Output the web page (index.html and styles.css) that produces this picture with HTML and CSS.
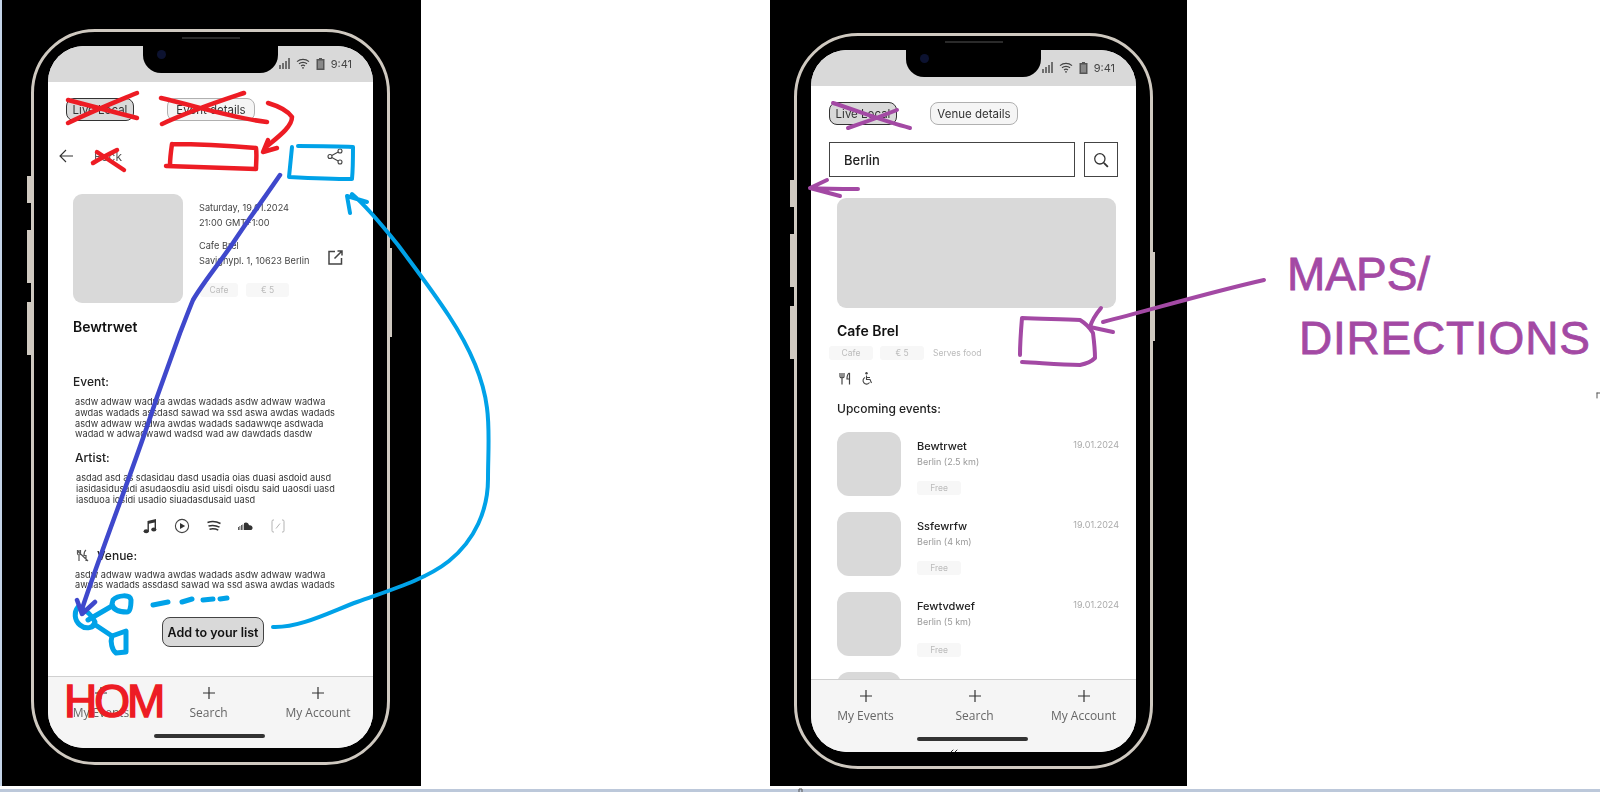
FILE: index.html
```html
<!DOCTYPE html>
<html lang="en">
<head>
    <meta charset="UTF-8">
    <meta name="viewport" content="width=device-width, initial-scale=1.0">
    <title>Wireframe review</title>
    <link rel="stylesheet" href="styles.css">
</head>
<body>
    <div class="desk">
        <!-- Event details wireframe -->
        <section class="panel panel-event">
            <div class="phone">
                <span class="side side-a"></span><span class="side side-b"></span><span class="side side-c"></span><span class="side side-r"></span>
                <span class="speaker"></span>
                <div class="screen">
                    <div class="notch"><span class="camera"></span></div>
                    <div class="statusbar">
                        <svg width="11" height="11" viewBox="0 0 11 11"><path d="M1 7v4M4 5v6M7 3v8M10 0v11" stroke="#555" stroke-width="1.600"/></svg>
                        <svg width="14" height="11" viewBox="0 0 14 11" fill="none" stroke="#444" stroke-width="1.200"><path d="M1 3.600C4.500.6 9.500.6 13 3.600M3 5.800c2.200-1.900 5.800-1.900 8 0M5 7.900c1.100-.8 2.900-.8 4 0"/><circle cx="7" cy="9.800" r=".9" fill="#444" stroke="none"/></svg>
                        <svg width="9" height="12" viewBox="0 0 9 12"><path d="M3 0h3v1h2.500v11H.5V1H3z" fill="#555"/><path d="M2 2.500h5v8H2z" fill="#888"/></svg>
                        <span class="clock">9:41</span>
                    </div>
                    <main class="main">
                        <div class="pills">
                            <span class="pill pill-on">Live Local</span>
                            <span class="pill">Event details</span>
                        </div>
                        <div class="backrow">
                            <svg width="14" height="14" viewBox="0 0 14 14" fill="none" stroke="#333" stroke-width="1.100"><path d="M14 7H1M7 1 1 7l6 6"/></svg>
                            <span class="back">Back</span>
                            <svg class="share" width="16" height="17" viewBox="0 0 16 17" fill="none" stroke="#444" stroke-width="1.100"><circle cx="13" cy="3" r="2"/><circle cx="3" cy="8.500" r="2"/><circle cx="13" cy="14" r="2"/><path d="m4.800 7.500 6.400-3.500M4.800 9.500l6.400 3.500"/></svg>
                        </div>
                        <div class="detail">
                            <div class="thumb thumb-big"></div>
                            <div class="info">
                                <p class="info-line">Saturday, 19.01.2024</p>
                                <p class="info-line">21:00 GMT+1:00</p>
                                <div class="venue-line">
                                    <div>
                                        <p class="info-line">Cafe Brel</p>
                                        <p class="info-line">Savignypl. 1, 10623 Berlin</p>
                                    </div>
                                    <svg class="ext" width="15" height="15" viewBox="0 0 15 15" fill="none" stroke="#444" stroke-width="1.500"><path d="M7 1.500H1v12.500h12.500V8M6.500 8.500 14 1M9.500 1H14v4.500"/></svg>
                                </div>
                                <div class="chips chips-detail">
                                    <span class="chip chip-a">Cafe</span>
                                    <span class="chip chip-b">€ 5</span>
                                </div>
                            </div>
                        </div>
                        <h1 class="title">Bewtrwet</h1>
                        <h2 class="label label-event">Event:</h2>
                        <p class="copy copy-event">asdw adwaw wadwa awdas wadads asdw adwaw wadwa<br>awdas wadads assdasd sawad wa ssd aswa awdas wadads<br>asdw adwaw wadwa awdas wadads sadawwqe asdwada<br>wadad w adwadwawd wadsd wad aw dawdads dasdw</p>
                        <h2 class="label label-artist">Artist:</h2>
                        <p class="copy copy-artist">asdad asd as sdasidau dasd usadia oias duasi asdoid ausd<br>iasidasidusadi asudaosdiu asid uisdi oisdu said uaosdi uasd<br>iasduoa iosidi usadio siuadasdusaid uasd</p>
                        <div class="links">
                            <svg width="16" height="16" viewBox="0 0 16 16" fill="#333"><path d="M5.500 3 14 1v10.500h-1.400V4.400l-5.700 1.300v7.800H5.500z"/><ellipse cx="4.200" cy="13.300" rx="2.600" ry="2"/><ellipse cx="11.800" cy="11.500" rx="2.600" ry="2"/></svg>
                            <svg width="16" height="16" viewBox="0 0 16 16" fill="#333"><circle cx="8" cy="8" r="6.600" fill="none" stroke="#444" stroke-width="1.100"/><path d="M6 5v6l5.200-3z"/></svg>
                            <svg width="16" height="16" viewBox="0 0 16 16" fill="none" stroke="#333" stroke-width="1.500"><path d="M1.500 4.500c4-1.300 9-1 13 1M2.500 8c3.500-1 7.500-.7 11 1.200M3.500 11.200c3-.7 6-.5 8.800 1"/></svg>
                            <svg width="16" height="16" viewBox="0 0 16 16" fill="#333"><path d="M0 9h.8v3H0zM1.500 8h.8v4h-.8zM3 7h.8v5H3zM4.500 6.500h.8V12h-.8z"/><path d="M6 12V5.200C8 3.700 10.800 5 11 7.300c1.900-.6 3.600 1 3.600 2.400 0 1.400-1 2.300-2.200 2.300z"/></svg>
                            <svg width="16" height="16" viewBox="0 0 16 16" fill="none" stroke="#aaa" stroke-width=".9"><path d="M4 2H3Q2 2 2 3.500v9Q2 14 3 14h1M12 2h1q1 0 1 1.500v9q0 1.500-1 1.500h-1M6 10.500 10 5.500"/></svg>
                        </div>
                        <div class="venue-head">
                            <svg width="13" height="13" viewBox="0 0 13 13" fill="none" stroke="#555" stroke-width="1.200"><path d="M1.500 1v3.500c0 1 1 1.500 1.500 1.500v6M3 1v3M4.500 1v3.500C4.500 5.500 3.500 6 3 6M10 1c-1.500 1-2 3-2 5.500h2V12M1 1.500 12 12"/></svg>
                            <h2 class="label">Venue:</h2>
                        </div>
                        <p class="copy copy-venue">asdw adwaw wadwa awdas wadads asdw adwaw wadwa<br>awdas wadads assdasd sawad wa ssd aswa awdas wadads</p>
                        <button class="cta">Add to your list</button>
                    </main>
                    <nav class="tabs tabs-event">
                        <div class="tab-row">
                            <div class="tab"><svg width="14" height="14" viewBox="0 0 14 14"><path d="M7 1v12M1 7h12" stroke="#333" stroke-width="1.200"/></svg><span>My Events</span></div>
                            <div class="tab"><svg width="14" height="14" viewBox="0 0 14 14"><path d="M7 1v12M1 7h12" stroke="#333" stroke-width="1.200"/></svg><span>Search</span></div>
                            <div class="tab"><svg width="14" height="14" viewBox="0 0 14 14"><path d="M7 1v12M1 7h12" stroke="#333" stroke-width="1.200"/></svg><span>My Account</span></div>
                        </div>
                        <div class="home"></div>
                    </nav>
                </div>
            </div>
        </section>

        <!-- Venue details wireframe -->
        <section class="panel panel-venue">
            <div class="phone">
                <span class="side side-a"></span><span class="side side-b"></span><span class="side side-c"></span><span class="side side-r"></span>
                <span class="speaker"></span>
                <div class="screen">
                    <div class="notch"><span class="camera"></span></div>
                    <div class="statusbar">
                        <svg width="11" height="11" viewBox="0 0 11 11"><path d="M1 7v4M4 5v6M7 3v8M10 0v11" stroke="#555" stroke-width="1.600"/></svg>
                        <svg width="14" height="11" viewBox="0 0 14 11" fill="none" stroke="#444" stroke-width="1.200"><path d="M1 3.600C4.500.6 9.500.6 13 3.600M3 5.800c2.200-1.900 5.800-1.900 8 0M5 7.900c1.100-.8 2.900-.8 4 0"/><circle cx="7" cy="9.800" r=".9" fill="#444" stroke="none"/></svg>
                        <svg width="9" height="12" viewBox="0 0 9 12"><path d="M3 0h3v1h2.500v11H.5V1H3z" fill="#555"/><path d="M2 2.500h5v8H2z" fill="#888"/></svg>
                        <span class="clock">9:41</span>
                    </div>
                    <main class="main">
                        <div class="pills">
                            <span class="pill pill-on">Live Local</span>
                            <span class="pill">Venue details</span>
                        </div>
                        <div class="searchrow">
                            <div class="searchbox">Berlin</div>
                            <div class="searchbtn">
                                <svg width="16" height="16" viewBox="0 0 14 14" fill="none" stroke="#333" stroke-width="1.100"><circle cx="6" cy="6" r="4.500"/><path d="m9.500 9.500 3.500 3.500" stroke-width="1.600"/></svg>
                            </div>
                        </div>
                        <div class="thumb thumb-wide"></div>
                        <h1 class="title title-venue">Cafe Brel</h1>
                        <div class="chips chips-venue">
                            <span class="chip chip-c">Cafe</span>
                            <span class="chip chip-c">€ 5</span>
                            <span class="chip-plain">Serves food</span>
                        </div>
                        <div class="amenities">
                            <svg width="12" height="13" viewBox="0 0 12 13" fill="none" stroke="#444" stroke-width="1.200"><path d="M1 1v3.500C1 5.500 2 6 3 6s2-.5 2-1.500V1M3 1v11.500M10.500 1C9 1.500 8 3.500 8 7h2.500M10.500 1v11.500"/></svg>
                            <svg width="11" height="13" viewBox="0 0 11 13" fill="none" stroke="#444" stroke-width="1.100"><circle cx="4.500" cy="1.300" r="1.200" fill="#444" stroke="none"/><path d="M4.500 3.500v4h3.500l1.500 3.500M4.500 5.500h3.500M3 5.500a3.500 3.500 0 1 0 4.500 5"/></svg>
                        </div>
                        <h2 class="label label-upcoming">Upcoming events:</h2>
                        <div class="eventlist">
                            <div class="event">
                                <div class="thumb thumb-small"></div>
                                <div class="event-body">
                                    <div class="event-title">Bewtrwet</div>
                                    <div class="event-sub">Berlin (2.5 km)</div>
                                    <span class="chip chip-c chip-free">Free</span>
                                </div>
                                <div class="event-date">19.01.2024</div>
                            </div>
                            <div class="event">
                                <div class="thumb thumb-small"></div>
                                <div class="event-body">
                                    <div class="event-title">Ssfewrfw</div>
                                    <div class="event-sub">Berlin (4 km)</div>
                                    <span class="chip chip-c chip-free">Free</span>
                                </div>
                                <div class="event-date">19.01.2024</div>
                            </div>
                            <div class="event">
                                <div class="thumb thumb-small"></div>
                                <div class="event-body">
                                    <div class="event-title">Fewtvdwef</div>
                                    <div class="event-sub">Berlin (5 km)</div>
                                    <span class="chip chip-c chip-free chip-low">Free</span>
                                </div>
                                <div class="event-date">19.01.2024</div>
                            </div>
                            <div class="event">
                                <div class="thumb thumb-small"></div>
                            </div>
                        </div>
                    </main>
                    <nav class="tabs tabs-venue">
                        <div class="tab-row">
                            <div class="tab"><svg width="14" height="14" viewBox="0 0 14 14"><path d="M7 1v12M1 7h12" stroke="#333" stroke-width="1.200"/></svg><span>My Events</span></div>
                            <div class="tab"><svg width="14" height="14" viewBox="0 0 14 14"><path d="M7 1v12M1 7h12" stroke="#333" stroke-width="1.200"/></svg><span>Search</span></div>
                            <div class="tab"><svg width="14" height="14" viewBox="0 0 14 14"><path d="M7 1v12M1 7h12" stroke="#333" stroke-width="1.200"/></svg><span>My Account</span></div>
                        </div>
                        <div class="home"></div>
                    </nav>
                </div>
            </div>
        </section>
    </div>
    <div class="strip"></div>

    <!-- Paint scribbles drawn over the screenshots -->
    <svg class="ink" width="1600" height="792" viewBox="0 0 1600 792" fill="none" stroke-linecap="round" stroke-linejoin="round">
        <g stroke="#ed1c24" stroke-width="4.500">
            <path d="M68 100 137 118M68 123C93 111 113 103 137 93"/>
            <path d="M161 98C196 106 231 118 267 122M162 124C192 110 217 102 244 93"/>
            <path d="M268 103C278 106 288 111 292 117 292 127 278 137 266 147M268 140 263 152 277 148"/>
            <path d="M172 144C171 151 170 158 170 165M172 144C202 144 232 146 256 148 257 155 256 162 256 169 228 168 196 167 166 166"/>
            <path d="M93 163C101 158 109 154 117 150M97 152 124 170"/>
        </g>
        <g stroke="#00a2e8" stroke-width="4">
            <path d="M292 147C291 157 290 167 289 177 309 178 331 179 352 179 353 169 353 157 353 147 335 146 317 146 298 146"/>
            <path d="M273 627C300 628 330 612 357 602 390 590 425 580 449 561 475 540 488 510 488 479 488 455 490 430 487 408 483 375 468 345 449 316 432 290 415 268 398 245 382 225 365 205 352 194M367 202 347 196 350 213"/>
        </g>
        <g stroke="#00a2e8" stroke-width="5">
            <path d="M78 607C74 612 74 620 80 625 86 630 94 628 95 622 92 615 86 610 78 607Z"/>
            <path d="M88 620 112 606M94 624 112 636"/>
            <path d="M113 600C118 595 130 594 131 600 131 607 130 612 127 612 120 612 113 610 112 604Z"/>
            <path d="M112 636 126 631 126 652 116 653C112 650 110 642 112 636Z"/>
            <path d="M153 605 168 602M182 602 192 599M203 600 213 599M220 599 227 598"/>
        </g>
        <path stroke="#3f48cc" stroke-width="4.500" d="M280 175C265 197 248 220 233 243 218 265 203 283 193 300 188 312 184 323 180 333 172 355 165 375 157 397 135 465 105 540 82 609M77 600 82 614 95 602"/>
        <g stroke="#a349a4" stroke-width="4">
            <path d="M833 103C858 111 883 121 910 128M848 128C866 122 882 116 897 110"/>
            <path d="M858 189C842 189 826 189 810 188M827 180 810 188 840 196"/>
            <path d="M1020 355C1020 343 1021 330 1022 318 1042 319 1062 319 1080 320 1085 323 1090 328 1093 333 1094 341 1095 350 1095 358 1091 362 1085 364 1080 365 1060 365 1042 363 1022 362"/>
            <path d="M1103 322C1157 308 1211 292 1264 280M1101 308C1096 314 1092 320 1090 327L1113 332"/>
        </g>
        <path stroke="#222" stroke-width="1" d="M951 752 953 750M955 752 957 750"/>
        <path stroke="#555" stroke-width="1" d="M799 792V789H802V792M1597 393H1600M1597 393V398"/>
    </svg>
    <div class="scrawl scrawl-hom">HOM</div>
    <div class="scrawl scrawl-maps">MAPS/</div>
    <div class="scrawl scrawl-dir">DIRECTIONS</div>
</body>
</html>
```

FILE: styles.css
```css
* {
    box-sizing: border-box;
}

body {
    margin: 0;
    width: 1600px;
    height: 792px;
    overflow: hidden;
    position: relative;
    background: #fff;
    font-family: Inter, "Liberation Sans", sans-serif;
    color: #222;
}

p, h1, h2 {
    margin: 0;
}

.desk {
    display: flex;
    height: 786px;
    border-left: 2px solid #c4d4e8;
}

.strip {
    height: 3px;
    margin-top: 3px;
    background: #bcc8da;
}

.panel {
    background: #000;
    flex: none;
}

.panel-event {
    width: 419px;
    padding: 29px 0 0 29px;
}

.panel-venue {
    width: 417px;
    margin-left: 349px;
    padding: 33px 0 0 24px;
}

/* phone shell */
.phone {
    position: relative;
    width: 359px;
    height: 736px;
    padding: 14px;
    border: 3px solid #cfc9c0;
    border-radius: 64px;
}

.side {
    position: absolute;
    background: #cfc9c0;
}

.side-a { left: -7px; width: 4px; top: 144px; height: 27px; }
.side-b { left: -7px; width: 4px; top: 198px; height: 53px; }
.side-c { left: -7px; width: 4px; top: 270px; height: 53px; }
.side-r { right: -5px; width: 2px; top: 216px; height: 89px; }

.speaker {
    position: absolute;
    left: 148px;
    top: 5px;
    width: 58px;
    height: 2px;
    background: #2a2a2a;
}

.screen {
    position: relative;
    width: 325px;
    height: 702px;
    display: flex;
    flex-direction: column;
    overflow: hidden;
    background: #fff;
    border-radius: 36px;
    filter: blur(.3px);
}

.notch {
    position: absolute;
    left: 95px;
    top: 0;
    width: 135px;
    height: 27px;
    background: #000;
    border-radius: 0 0 18px 18px;
}

.camera {
    position: absolute;
    left: 14px;
    top: 4px;
    width: 9px;
    height: 9px;
    border-radius: 50%;
    background: #0c1230;
}

.statusbar {
    flex: none;
    height: 36px;
    padding: 12px 21px 0 0;
    display: flex;
    align-items: flex-start;
    justify-content: flex-end;
    gap: 6px;
    background: #d9d9d9;
}

.clock {
    font-size: 11px;
    line-height: 13px;
    color: #444;
}

.main {
    flex: 1;
    min-height: 0;
    overflow: hidden;
}

/* pills */
.pills {
    display: flex;
    gap: 33px;
    padding: 16px 0 0 18px;
}

.pill {
    height: 23px;
    width: 88px;
    display: flex;
    align-items: center;
    justify-content: center;
    font-size: 11.500px;
    color: #333;
    background: #f5f5f5;
    border: 1px solid #b0b0b0;
    border-radius: 8px;
}

.pill-on {
    width: 68px;
    background: #d9d9d9;
    border-color: #333;
}

/* event screen */
.backrow {
    display: flex;
    align-items: center;
    height: 20px;
    margin: 25px 30px 0 11px;
    gap: 21px;
}

.back {
    font-size: 12px;
    color: #555;
}

.share {
    margin-left: auto;
}

.detail {
    display: flex;
    gap: 16px;
    margin-top: 28px;
    padding-left: 25px;
}

.thumb {
    background: #d9d9d9;
    border-radius: 9px;
}

.thumb-big {
    width: 110px;
    height: 109px;
    flex: none;
}

.info {
    width: 144px;
    padding-top: 6px;
}

.info-line {
    font-size: 9.200px;
    line-height: 15px;
    white-space: nowrap;
    color: #444;
}

.venue-line {
    display: flex;
    justify-content: space-between;
    margin-top: 8px;
}

.ext {
    margin-top: 12px;
}

.chips {
    display: flex;
}

.chips-detail {
    margin: 15px 0 0 1px;
    gap: 8px;
}

.chip {
    height: 14px;
    display: flex;
    align-items: center;
    justify-content: center;
    font-size: 8.500px;
    color: #bbb;
    background: #f7f7f7;
    border-radius: 3px;
}

.chip-a { width: 38px; }
.chip-b { width: 43px; }
.chip-c { width: 44px; }

.title {
    font-size: 14px;
    line-height: 18px;
    font-weight: 600;
    color: #111;
    margin: 15px 0 0 25px;
}

.label {
    font-size: 12px;
    line-height: 16px;
    font-weight: 500;
    color: #222;
}

.label-event {
    margin: 38px 0 0 25px;
}

.label-artist {
    margin: 10px 0 0 27px;
}

.copy {
    font-size: 9.200px;
    line-height: 10.800px;
    white-space: nowrap;
    color: #333;
}

.copy-event {
    margin: 7px 0 0 27px;
}

.copy-artist {
    margin: 7px 0 0 28px;
}

.copy-venue {
    margin: 6px 0 0 27px;
}

.links {
    display: flex;
    gap: 16px;
    margin: 12px 0 0 94px;
}

.venue-head {
    display: flex;
    align-items: center;
    gap: 8px;
    margin: 14px 0 0 28px;
}

.cta {
    display: block;
    width: 102px;
    height: 30px;
    margin: 26px 0 0 114px;
    padding: 0;
    font-family: inherit;
    font-size: 12.500px;
    font-weight: 600;
    color: #111;
    background: #d9d9d9;
    border: 1px solid #444;
    border-radius: 8px;
}

/* venue screen */
.searchrow {
    display: flex;
    gap: 9px;
    margin: 17px 0 0 18px;
}

.searchbox {
    width: 246px;
    height: 35px;
    padding-left: 14px;
    display: flex;
    align-items: center;
    font-size: 13px;
    font-weight: 500;
    border: 1px solid #444;
}

.searchbtn {
    width: 34px;
    height: 35px;
    display: flex;
    align-items: center;
    justify-content: center;
    border: 1px solid #444;
}

.thumb-wide {
    width: 279px;
    height: 110px;
    margin: 21px 0 0 26px;
}

.title-venue {
    margin: 14px 0 0 26px;
}

.chips-venue {
    margin: 6px 0 0 18px;
    gap: 7px;
    align-items: center;
}

.chip-plain {
    margin-left: 2px;
    font-size: 8.500px;
    color: #bbb;
}

.amenities {
    display: flex;
    gap: 11px;
    margin: 12px 0 0 28px;
}

.label-upcoming {
    margin: 16px 0 0 26px;
}

.eventlist {
    display: flex;
    flex-direction: column;
    gap: 16px;
    margin: 15px 0 0 26px;
    width: 282px;
}

.event {
    display: flex;
    gap: 16px;
    height: 64px;
    flex: none;
}

.thumb-small {
    width: 64px;
    height: 64px;
    flex: none;
    border-radius: 12px;
}

.event-body {
    flex: 1;
    padding-top: 6px;
}

.event-title {
    font-size: 11px;
    line-height: 16px;
    font-weight: 500;
    color: #222;
}

.event-sub {
    margin-top: 2px;
    font-size: 9px;
    line-height: 12px;
    color: #999;
}

.chip-free {
    margin-top: 13px;
}

.chip-low {
    margin-top: 15px;
}

.event-date {
    padding-top: 6px;
    font-size: 9px;
    line-height: 14px;
    color: #aaa;
}

/* bottom tabs */
.tabs {
    flex: none;
    display: flex;
    flex-direction: column;
    background: #f5f5f5;
    border-top: 1px solid #d0d0d0;
}

.tabs-event {
    height: 72px;
}

.tabs-venue {
    height: 73px;
}

.tab-row {
    display: grid;
    grid-template-columns: 109px 109px 109px;
}

.tabs-event .tab-row {
    grid-template-columns: 106px 109px 110px;
}

.tab {
    display: flex;
    flex-direction: column;
    align-items: center;
    padding-top: 9px;
}

.tab span {
    margin-top: 4px;
    font-family: "Open Sans", sans-serif;
    font-size: 12px;
    line-height: 18px;
    color: #666;
    white-space: nowrap;
}

.home {
    width: 111px;
    height: 4px;
    margin: 12px 0 0 106px;
    background: #333;
    border-radius: 2px;
}

/* paint layer */
.ink {
    position: absolute;
    left: 0;
    top: 0;
}

.scrawl {
    position: absolute;
    font-family: "Liberation Sans", sans-serif;
    white-space: nowrap;
}

.scrawl-hom {
    left: 64px;
    top: 674px;
    font-size: 46px;
    line-height: 54px;
    letter-spacing: -3px;
    color: #ed1c24;
    -webkit-text-stroke: 1.500px #ed1c24;
}

.scrawl-maps {
    left: 1287px;
    top: 250px;
    font-size: 46px;
    line-height: 48px;
    color: #a349a4;
    -webkit-text-stroke: .8px #a349a4;
}

.scrawl-dir {
    left: 1299px;
    top: 314px;
    font-size: 46px;
    line-height: 48px;
    letter-spacing: .8px;
    color: #a349a4;
    -webkit-text-stroke: .8px #a349a4;
}
```
